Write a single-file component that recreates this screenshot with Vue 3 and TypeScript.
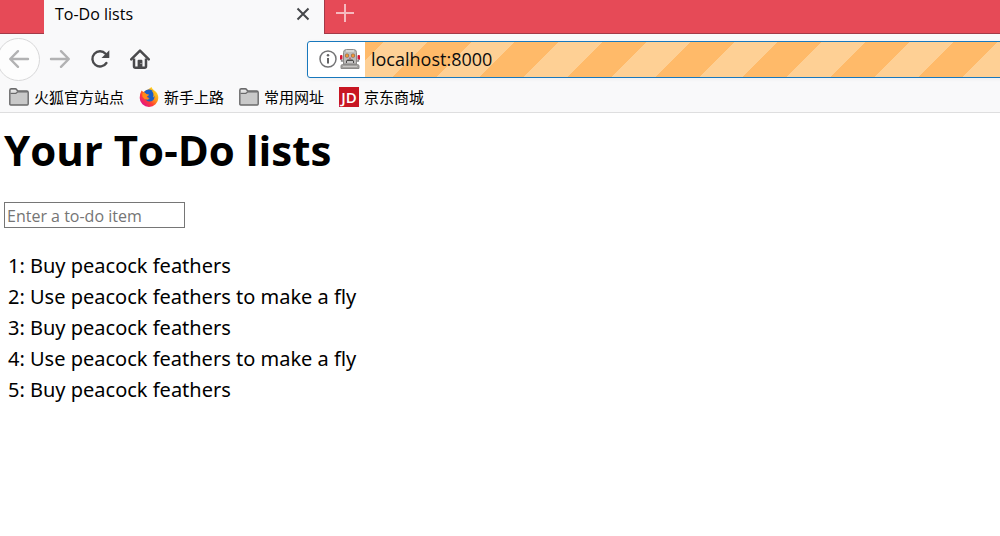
<script setup lang="ts">
import { ref } from 'vue'

interface Bookmark {
  label: string
  icon: 'folder' | 'firefox' | 'jd'
}

const bookmarks: Bookmark[] = [
  { label: '火狐官方站点', icon: 'folder' },
  { label: '新手上路', icon: 'firefox' },
  { label: '常用网址', icon: 'folder' },
  { label: '京东商城', icon: 'jd' },
]

const items = ref<string[]>([
  'Buy peacock feathers',
  'Use peacock feathers to make a fly',
  'Buy peacock feathers',
  'Use peacock feathers to make a fly',
  'Buy peacock feathers',
])

const address = ref('localhost:8000')
const draft = ref('')

function addItem() {
  const text = draft.value.trim()
  if (text) items.value.push(text)
  draft.value = ''
}
</script>

<template>
  <div class="browser">
    <header>
      <div class="tabs">
        <div class="tab">
          <span class="tab-title">To-Do lists</span>
          <button class="tab-close" type="button" aria-label="Close tab">
            <svg width="14" height="14" viewBox="0 0 14 14"><path d="M1.5 1.5l11 11M12.5 1.5l-11 11" stroke="#45474a" stroke-width="2" fill="none" /></svg>
          </button>
        </div>
        <div class="tab-rest">
          <button class="tab-new" type="button" aria-label="New tab">
            <svg width="18" height="18" viewBox="0 0 18 18"><path d="M9 0v18M0 9h18" stroke="#f6b9bf" stroke-width="2" fill="none" /></svg>
          </button>
        </div>
      </div>

      <div class="toolbar">
        <nav class="nav">
          <button class="back" type="button" aria-label="Back">
            <svg width="22" height="20" viewBox="0 0 22 20"><path d="M20 10H2.5M10 2.2L2.2 10l7.8 7.8" stroke="#b2b2b3" stroke-width="2.4" stroke-linecap="round" stroke-linejoin="round" fill="none" /></svg>
          </button>
          <button class="tool" type="button" aria-label="Forward">
            <svg width="22" height="20" viewBox="0 0 22 20"><path d="M2 10h17.5M12 2.2l7.8 7.8-7.8 7.8" stroke="#b2b2b3" stroke-width="2.4" stroke-linecap="round" stroke-linejoin="round" fill="none" /></svg>
          </button>
          <button class="tool" type="button" aria-label="Reload">
            <svg width="20" height="20" viewBox="0 0 20 20"><path d="M16.4 14A7.6 7.6 0 1 1 15.6 4.7" stroke="#4a4a4c" stroke-width="2.400" stroke-linecap="round" fill="none" /><path d="M19.300 1.2v7.3a.6.6 0 0 1-.6.6h-7.2z" fill="#4a4a4c" /></svg>
          </button>
          <button class="tool" type="button" aria-label="Home">
            <svg width="20" height="20" viewBox="0 0 20 20"><path d="M1.2 10.4L10 1.6l8.800 8.800" stroke="#4a4a4c" stroke-width="2.500" stroke-linecap="round" stroke-linejoin="round" fill="none" /><path d="M4 9.500V17.200a1.500 1.500 0 0 0 1.500 1.500h9a1.500 1.500 0 0 0 1.500-1.500V9.500" stroke="#4a4a4c" stroke-width="2.500" fill="none" /><path d="M7.600 18.700v-7a.9.9 0 0 1 .9-.9h3a.9.9 0 0 1 .9.9v7z" fill="#4a4a4c" /><path d="M10.500 14.500h1" stroke="#ccc" stroke-width="1.200" /></svg>
          </button>
        </nav>
        <div class="urlbar">
          <div class="identity">
            <svg width="18" height="18" viewBox="0 0 18 18"><circle cx="9" cy="9" r="8" stroke="#737375" stroke-width="1.500" fill="none" /><path d="M9 8v5.500" stroke="#626264" stroke-width="2" /><circle cx="9" cy="5.200" r="1.250" fill="#626264" /></svg>
            <svg width="20" height="20" viewBox="0 0 20 20">
              <rect x="0" y="6" width="2.500" height="5" rx="1" fill="#d51638" /><rect x="17.500" y="6" width="2.500" height="5" rx="1" fill="#d51638" />
              <path d="M1.500 10v2h2M18.500 10v2h-2" stroke="#8a8a8a" stroke-width="1.300" fill="none" />
              <path d="M3.500 15V3.500Q3.500 .5 6.500 .5h7q3 0 3 3V15z" fill="#bdbcbb" stroke="#8b8a88" />
              <path d="M6 2h8" stroke="#dfdedd" stroke-width="1.500" />
              <circle cx="7" cy="6.700" r="2.100" fill="#936a50" /><circle cx="13" cy="6.700" r="2.100" fill="#936a50" />
              <circle cx="7" cy="6.700" r="1.400" fill="#f39834" /><circle cx="13" cy="6.700" r="1.400" fill="#f39834" />
              <path d="M9.500 8.500h1v1.500h-1z" fill="#d51638" />
              <path d="M6 14v-2l1.500-1.500h5L14 12v2z" fill="#4d4c4b" /><path d="M7 13h6" stroke="#eee" stroke-width="1.500" />
              <path d="M1 19.500v-2.500q0-1.500 1.500-1.500h15q1.500 0 1.500 1.500v2.500z" fill="#a3a2a0" stroke="#8b8a88" /><path d="M3 17.500h14" stroke="#c8c7c5" />
            </svg>
          </div>
          <input v-model="address" class="address" type="text" aria-label="Address" spellcheck="false" />
        </div>
      </div>

      <nav class="bookmarks">
        <a v-for="mark in bookmarks" :key="mark.label" class="bookmark" href="#">
          <svg v-if="mark.icon === 'folder'" width="20" height="20" viewBox="0 0 20 20">
            <path d="M.8 17V3.300Q.8 1.800 2.300 1.800h4q.8 0 1.300.7L8.800 4H17.700q1.500 0 1.500 1.500V17q0 1-1 1H1.800q-1 0-1-1z" fill="#c9c9c9" stroke="#69696a" stroke-width="1.400" />
            <path d="M1.500 6.500h5.300L8.500 5h10" fill="none" stroke="#69696a" stroke-width="1.200" /><path d="M2 3h4.500l1 1.800H2z" fill="#e8e8e8" />
          </svg>
          <svg v-else-if="mark.icon === 'firefox'" width="20" height="20" viewBox="0 0 20 20">
            <defs>
              <linearGradient id="flame" x1="0.9" y1="0.100" x2="0.200" y2="0.900"><stop offset="0" stop-color="#ffe226" /><stop offset="0.400" stop-color="#ff9a16" /><stop offset="0.700" stop-color="#ff3d35" /><stop offset="1" stop-color="#e31587" /></linearGradient>
            </defs>
            <path d="M2.500 3.500l2 1.500Q6.500 3 9 2.500L12.500 0Q13 2 15 3.200 19.300 6 19.300 11A9.300 9 0 0 1 .7 11Q.6 7 2.500 3.500z" fill="url(#flame)" />
            <path d="M5.500 4.500Q8 1.700 12 2.800q4 1.700 3.600 7Q15 14.500 10.600 14.500 7 14.300 6 11q2 1.400 4 0L8 9.500 5.800 8z" fill="#1b5fc6" />
            <path d="M3.300 6.200q3-1 4 .8l2.700.5q.2 1-1.800 1.800l-.5 1.200q1 1.200 3 .5-.8 1.900-3.200 1.600-2.700-.3-4.200-3z" fill="#ff8a18" />
            <path d="M12.500 3.500q3 3 1.500 7 2.500-1 2.200-4.500Q15 3.500 12.500 3.500z" fill="#ffb41d" />
          </svg>
          <svg v-else width="20" height="20" viewBox="0 0 20 20">
            <rect width="20" height="20" fill="#c81623" />
            <text x="10" y="16" text-anchor="middle" class="jd">JD</text>
          </svg>
          <span>{{ mark.label }}</span>
        </a>
      </nav>
    </header>

    <main>
      <h1>Your To-Do lists</h1>
      <form @submit.prevent="addItem">
        <input v-model="draft" class="entry" type="text" aria-label="New to-do item" placeholder="Enter a to-do item" />
      </form>
      <table>
        <tbody>
          <tr v-for="(item, index) in items" :key="index">
            <td>{{ index + 1 }}: {{ item }}</td>
          </tr>
        </tbody>
      </table>
    </main>
  </div>
</template>

<style>
body {
  margin: 0;
  background: #fff;
}
</style>

<style scoped>
.browser {
  color: #000;
  font-family: 'Open Sans', 'Noto Sans', 'Noto Sans CJK SC', sans-serif;
  overflow-x: hidden;
}

header {
  background: #f9f9fa;
  border-bottom: 1px solid #dededf;
}

svg {
  display: block;
  flex: none;
}

button {
  display: flex;
  align-items: center;
  justify-content: center;
  padding: 0;
  border: 0;
  background: none;
}

.tabs {
  display: flex;
  height: 34px;
}

.tabs::before {
  content: '';
  box-sizing: border-box;
  width: 44px;
  background: #e64a57;
  border-bottom: 1px solid #a33a48;
}

.tab {
  box-sizing: border-box;
  display: flex;
  align-items: center;
  justify-content: space-between;
  width: 280px;
  padding: 0 14px 6px 11px;
}

.tab-title {
  font-size: 16px;
  line-height: 20px;
}

.tab-rest {
  box-sizing: border-box;
  flex: 1;
  padding: 4px 11px;
  background: #e64a57;
  border-bottom: 1px solid #a33a48;
  border-left: 1px solid #a33a48;
}

.toolbar {
  display: flex;
  align-items: center;
  height: 50px;
}

.nav {
  display: flex;
  align-items: center;
  width: 307px;
  flex: none;
}

.back {
  box-sizing: border-box;
  width: 43px;
  height: 43px;
  margin-left: -3px;
  border: 1px solid #d8d8d9;
  border-radius: 50%;
  background: #fdfdfd;
}

.tool {
  width: 40px;
  height: 40px;
}

.urlbar {
  box-sizing: border-box;
  display: flex;
  flex: 1;
  height: 37px;
  margin-right: -4px;
  border: 1px solid #1878bd;
  border-radius: 3px;
  background: #fff;
  box-shadow: 0 1px 4px #0000000d;
}

.identity {
  display: flex;
  align-items: center;
  gap: 3px;
  padding: 0 5px 0 11px;
}

.address {
  flex: 1;
  min-width: 0;
  padding: 0 6px;
  border: 0;
  outline: 0;
  color: #0c0c0d;
  font-family: inherit;
  font-size: 18px;
  background: repeating-linear-gradient(135deg, #ffba69 0 13px, #fed095 13px 44px, #ffba69 44px 62px);
}

.bookmarks {
  display: flex;
  align-items: flex-start;
  gap: 15px;
  height: 25px;
  padding: 3px 9px 0;
}

.bookmark {
  display: flex;
  align-items: center;
  gap: 5px;
  color: inherit;
  font-size: 15px;
  line-height: 19px;
  text-decoration: none;
}

.jd {
  fill: #fff;
  font-family: 'Open Sans', sans-serif;
  font-size: 15px;
  font-weight: 600;
}

main {
  padding: 8px 4px;
}

h1 {
  margin: 0 0 24px;
  font-size: 42px;
  line-height: 57px;
}

.entry {
  box-sizing: border-box;
  display: block;
  width: 181px;
  height: 26px;
  padding: 2px 2px 0;
  border: 1px solid #767676;
  font-family: inherit;
  font-size: 16px;
}

.entry::placeholder {
  color: #757575;
}

table {
  margin-top: 21px;
  border-spacing: 2px;
  font-family: 'Noto Sans', 'Open Sans', sans-serif;
  font-size: 20px;
  line-height: 27px;
}

td {
  padding: 1px 2px;
}
</style>
